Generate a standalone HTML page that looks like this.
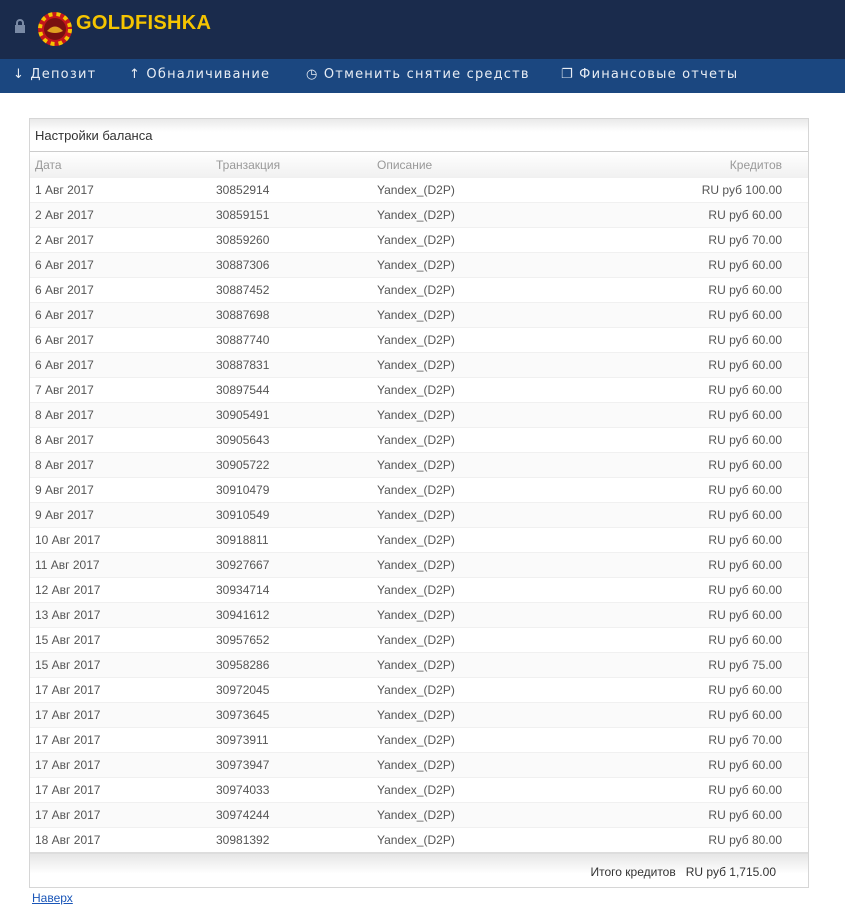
<!DOCTYPE html>
<html><head><meta charset="utf-8"><style>
body{margin:0;width:845px;height:912px;background:#fff;font-family:"DejaVu Sans","Liberation Sans",sans-serif;overflow:hidden}
.hdr{height:59px;background:#1a2b4c;position:relative}
.nav{height:34px;background:#1b4780;color:#e8edf4;font-size:13px;letter-spacing:1.2px;position:relative}
.nav span{position:absolute;top:8px}
.panel{position:absolute;left:29px;top:118px;width:778px;border:1px solid #d6d6d6;font-size:12px;color:#555;font-family:"Liberation Sans",sans-serif}
.title{height:32px;line-height:33px;padding-left:5px;font-size:13px;color:#333;background:linear-gradient(#e9e9e9,#fff 40%,#fff);border-bottom:1px solid #ccc}
.th{height:25px;line-height:26px;color:#999;background:linear-gradient(#fff,#f1f1f1);position:relative}
.r{height:25px;line-height:25px;position:relative;border-top:1px solid #f0f0f0;box-sizing:border-box}
.r:nth-child(even){background:#fafafa}
.c1,.c2,.c3,.c4{position:absolute}
.c1{left:5px}.c2{left:186px}.c3{left:347px}.c4{right:26px}
.ft{height:33px;line-height:36px;border-top:2px solid #ddd;background:linear-gradient(#e6e6e6,#fff 60%);text-align:right;padding-right:32px;color:#333;font-size:12px}
a{position:absolute;left:32px;top:891px;font-size:12px;color:#1a56b8;font-family:"Liberation Sans",sans-serif}
</style></head><body>
<div class="hdr">
<svg style="position:absolute;left:14px;top:19px" width="12" height="14" viewBox="0 0 12 14"><path d="M3 6V4a3 3 0 0 1 6 0v2" stroke="#7a8aa5" stroke-width="2" fill="none"/><rect x="1" y="6" width="10" height="8" fill="#7a8aa5"/></svg>
<svg style="position:absolute;left:37px;top:11px" width="36" height="36" viewBox="0 0 36 36"><circle cx="18" cy="18" r="17" fill="#c4161c"/><circle cx="18" cy="18" r="15" fill="none" stroke="#f5c400" stroke-width="4" stroke-dasharray="4 4"/><circle cx="18" cy="18" r="11" fill="#7a1010"/><path d="M10 20q8-9 16 0q-8 4-16 0z" fill="#e0a020"/></svg>
<div style="position:absolute;left:76px;top:12px;color:#f5c400;font:bold 20px 'Liberation Sans',sans-serif;letter-spacing:0.3px">GOLDFISHKA</div>
</div>
<div class="nav">
<span style="left:13px">↓ Депозит</span>
<span style="left:129px">↑ Обналичивание</span>
<span style="left:306px">◷ Отменить снятие средств</span>
<span style="left:561px">❐ Финансовые отчеты</span>
</div>
<div class="panel">
<div class="title">Настройки баланса</div>
<div class="th"><span class="c1">Дата</span><span class="c2">Транзакция</span><span class="c3">Описание</span><span class="c4">Кредитов</span></div>
<div>
<div class="r"><span class="c1">1 Авг 2017</span><span class="c2">30852914</span><span class="c3">Yandex_(D2P)</span><span class="c4">RU руб 100.00</span></div>
<div class="r"><span class="c1">2 Авг 2017</span><span class="c2">30859151</span><span class="c3">Yandex_(D2P)</span><span class="c4">RU руб 60.00</span></div>
<div class="r"><span class="c1">2 Авг 2017</span><span class="c2">30859260</span><span class="c3">Yandex_(D2P)</span><span class="c4">RU руб 70.00</span></div>
<div class="r"><span class="c1">6 Авг 2017</span><span class="c2">30887306</span><span class="c3">Yandex_(D2P)</span><span class="c4">RU руб 60.00</span></div>
<div class="r"><span class="c1">6 Авг 2017</span><span class="c2">30887452</span><span class="c3">Yandex_(D2P)</span><span class="c4">RU руб 60.00</span></div>
<div class="r"><span class="c1">6 Авг 2017</span><span class="c2">30887698</span><span class="c3">Yandex_(D2P)</span><span class="c4">RU руб 60.00</span></div>
<div class="r"><span class="c1">6 Авг 2017</span><span class="c2">30887740</span><span class="c3">Yandex_(D2P)</span><span class="c4">RU руб 60.00</span></div>
<div class="r"><span class="c1">6 Авг 2017</span><span class="c2">30887831</span><span class="c3">Yandex_(D2P)</span><span class="c4">RU руб 60.00</span></div>
<div class="r"><span class="c1">7 Авг 2017</span><span class="c2">30897544</span><span class="c3">Yandex_(D2P)</span><span class="c4">RU руб 60.00</span></div>
<div class="r"><span class="c1">8 Авг 2017</span><span class="c2">30905491</span><span class="c3">Yandex_(D2P)</span><span class="c4">RU руб 60.00</span></div>
<div class="r"><span class="c1">8 Авг 2017</span><span class="c2">30905643</span><span class="c3">Yandex_(D2P)</span><span class="c4">RU руб 60.00</span></div>
<div class="r"><span class="c1">8 Авг 2017</span><span class="c2">30905722</span><span class="c3">Yandex_(D2P)</span><span class="c4">RU руб 60.00</span></div>
<div class="r"><span class="c1">9 Авг 2017</span><span class="c2">30910479</span><span class="c3">Yandex_(D2P)</span><span class="c4">RU руб 60.00</span></div>
<div class="r"><span class="c1">9 Авг 2017</span><span class="c2">30910549</span><span class="c3">Yandex_(D2P)</span><span class="c4">RU руб 60.00</span></div>
<div class="r"><span class="c1">10 Авг 2017</span><span class="c2">30918811</span><span class="c3">Yandex_(D2P)</span><span class="c4">RU руб 60.00</span></div>
<div class="r"><span class="c1">11 Авг 2017</span><span class="c2">30927667</span><span class="c3">Yandex_(D2P)</span><span class="c4">RU руб 60.00</span></div>
<div class="r"><span class="c1">12 Авг 2017</span><span class="c2">30934714</span><span class="c3">Yandex_(D2P)</span><span class="c4">RU руб 60.00</span></div>
<div class="r"><span class="c1">13 Авг 2017</span><span class="c2">30941612</span><span class="c3">Yandex_(D2P)</span><span class="c4">RU руб 60.00</span></div>
<div class="r"><span class="c1">15 Авг 2017</span><span class="c2">30957652</span><span class="c3">Yandex_(D2P)</span><span class="c4">RU руб 60.00</span></div>
<div class="r"><span class="c1">15 Авг 2017</span><span class="c2">30958286</span><span class="c3">Yandex_(D2P)</span><span class="c4">RU руб 75.00</span></div>
<div class="r"><span class="c1">17 Авг 2017</span><span class="c2">30972045</span><span class="c3">Yandex_(D2P)</span><span class="c4">RU руб 60.00</span></div>
<div class="r"><span class="c1">17 Авг 2017</span><span class="c2">30973645</span><span class="c3">Yandex_(D2P)</span><span class="c4">RU руб 60.00</span></div>
<div class="r"><span class="c1">17 Авг 2017</span><span class="c2">30973911</span><span class="c3">Yandex_(D2P)</span><span class="c4">RU руб 70.00</span></div>
<div class="r"><span class="c1">17 Авг 2017</span><span class="c2">30973947</span><span class="c3">Yandex_(D2P)</span><span class="c4">RU руб 60.00</span></div>
<div class="r"><span class="c1">17 Авг 2017</span><span class="c2">30974033</span><span class="c3">Yandex_(D2P)</span><span class="c4">RU руб 60.00</span></div>
<div class="r"><span class="c1">17 Авг 2017</span><span class="c2">30974244</span><span class="c3">Yandex_(D2P)</span><span class="c4">RU руб 60.00</span></div>
<div class="r"><span class="c1">18 Авг 2017</span><span class="c2">30981392</span><span class="c3">Yandex_(D2P)</span><span class="c4">RU руб 80.00</span></div>
</div>
<div class="ft">Итого кредитов&nbsp;&nbsp; RU руб 1,715.00</div>
</div>
<a href="#">Наверх</a>
</body></html>
